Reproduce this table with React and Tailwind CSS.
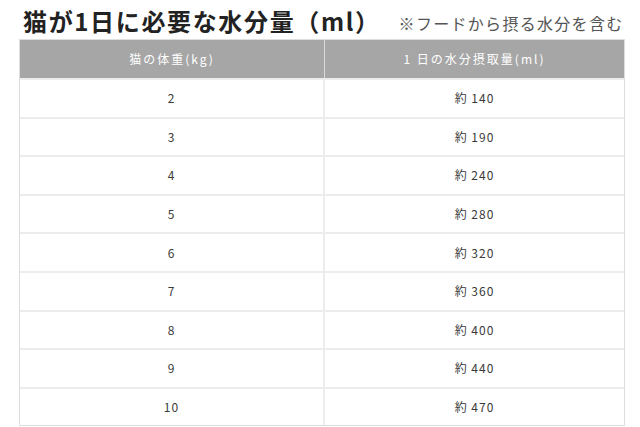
import React from "react";

const rows = [
  ["2", "約 140"],
  ["3", "約 190"],
  ["4", "約 240"],
  ["5", "約 280"],
  ["6", "約 320"],
  ["7", "約 360"],
  ["8", "約 400"],
  ["9", "約 440"],
  ["10", "約 470"],
];

export default function App() {
  return (
    <div
      className="w-[640px] h-[427px] bg-white overflow-hidden"
      style={{ fontFamily: '"Noto Sans CJK JP", "Noto Sans", sans-serif' }}
    >
      <div className="h-[39px] flex items-end pl-[23px] pb-[3px]">
        <span className="text-[24px] leading-[30px] font-bold tracking-[1.65px] text-[#222]">
          猫が1日に必要な水分量（ml）
        </span>
        <span className="ml-[18px] mb-[3px] text-[16px] leading-[20px] tracking-[1.3px] text-[#555]">
          ※フードから摂る水分を含む
        </span>
      </div>
      <div className="ml-[19px] w-[606px] border border-[#dedede]">
        <div className="grid grid-cols-[305px_1fr] h-[38px] bg-[#a6a6a6] text-white text-[12px] tracking-[2px]">
          <div className="flex items-center justify-center border-r border-[#d9d9d9]">猫の体重(kg)</div>
          <div className="flex items-center justify-center">1 日の水分摂取量(ml)</div>
        </div>
        {rows.map(([a, b], i) => (
          <div
            key={i}
            className="grid grid-cols-[305px_1fr] h-[38.6px] border-t-2 border-[#ececec] text-[12px] tracking-[1px] text-[#3a3a3a]"
          >
            <div className="flex items-center justify-center border-r-2 border-[#ececec]">{a}</div>
            <div className="flex items-center justify-center">{b}</div>
          </div>
        ))}
      </div>
    </div>
  );
}
